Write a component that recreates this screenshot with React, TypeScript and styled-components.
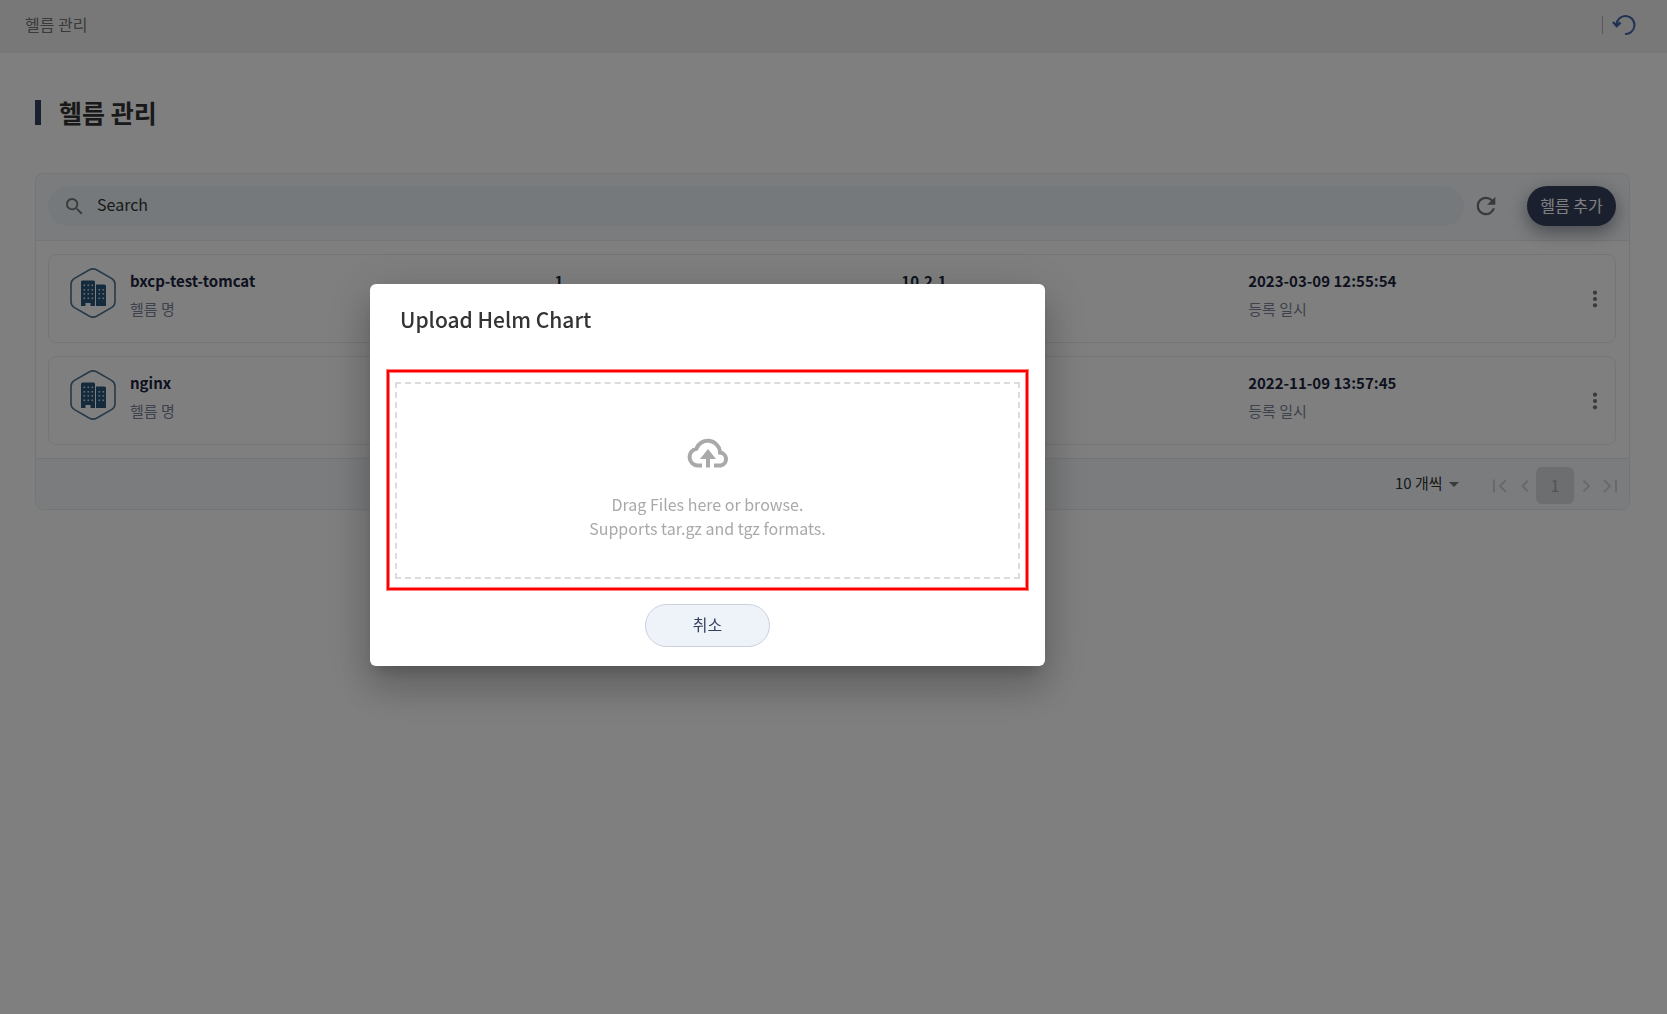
import React from 'react';
import styled, { createGlobalStyle } from 'styled-components';

const NAVY = '#36405f';
const LINE = '#e6ebef';
const BAR = '#f7f9fb';

const GlobalStyle = createGlobalStyle`
  *, *::before, *::after { box-sizing: border-box; }
  body {
    margin: 0;
    background: #fff;
    color: #333;
    font-family: "Noto Sans CJK KR", "Noto Sans", sans-serif;
    font-size: 16px;
    line-height: 24px;
  }
  button, input, select { font: inherit; color: inherit; }
  h1, h2, p, ul { margin: 0; padding: 0; }
`;

const TopBar = styled.header`
  display: flex;
  align-items: center;
  justify-content: space-between;
  height: 53px;
  padding: 0 31px 4px 25px;
  background: #f0f0f0;
  color: #757575;
`;

const Crumb = styled.span`
  padding-bottom: 2px;
`;

const TopActions = styled.div`
  display: flex;
  align-items: center;
  gap: 9px;
`;

const Divider = styled.span`
  width: 1px;
  height: 18px;
  background: #b0b0b0;
`;

const IconButton = styled.button<{ $size?: number }>`
  display: inline-flex;
  flex: none;
  align-items: center;
  justify-content: center;
  width: ${(p) => p.$size ?? 24}px;
  height: ${(p) => p.$size ?? 24}px;
  padding: 0;
  border: 0;
  background: none;
  cursor: pointer;
`;

const Main = styled.main`
  padding: 40px 37px 0 35px;
`;

const PageTitle = styled.h1`
  display: flex;
  align-items: center;
  gap: 18px;
  height: 38px;
  font-size: 25px;
  line-height: 38px;
  font-weight: 700;

  &::before {
    content: '';
    width: 6px;
    height: 25px;
    background: ${NAVY};
  }
`;

const Panel = styled.section`
  margin-top: 42px;
  border: 1px solid ${LINE};
  border-radius: 8px;
  overflow: hidden;
`;

const Toolbar = styled.div`
  display: flex;
  align-items: center;
  height: 67px;
  padding: 0 13px 2px 12px;
  border-bottom: 1px solid ${LINE};
  background: ${BAR};
`;

const SearchBox = styled.label`
  display: flex;
  flex: 1;
  align-items: center;
  gap: 14px;
  height: 40px;
  padding: 0 18px;
  border-radius: 20px;
  background: #ebf3f7;
  color: #757575;
`;

const SearchInput = styled.input`
  flex: 1;
  min-width: 0;
  padding: 0 0 4px;
  border: 0;
  outline: 0;
  background: none;

  &::placeholder { color: #333; opacity: 1; }
`;

const ReloadSlot = styled.div`
  display: flex;
  margin: 0 27px 0 8px;
`;

const AddButton = styled.button`
  width: 89px;
  height: 40px;
  padding: 0 0 2px;
  border: 0;
  border-radius: 20px;
  background: ${NAVY};
  color: #fff;
  box-shadow: 0 6px 18px rgba(40, 46, 66, 0.5);
  cursor: pointer;
`;

const HelmList = styled.ul`
  display: grid;
  gap: 13px;
  padding: 13px 13px 13px 12px;
  list-style: none;
`;

const HelmCard = styled.li`
  display: grid;
  grid-template-columns: 7fr 5fr 5fr 5fr;
  align-items: center;
  height: 89px;
  padding: 0 20px;
  border: 1px solid ${LINE};
  border-radius: 8px;
`;

const Cell = styled.div`
  display: flex;
  align-items: center;
  gap: 14px;
  height: 66px;
`;

const CellText = styled.div`
  flex: 1;
  height: 66px;
`;

const Value = styled.p`
  font-size: 15px;
  line-height: 30px;
  font-weight: 700;
  color: #1c2540;
`;

const Caption = styled.p`
  font-size: 15px;
  line-height: 25px;
  color: #7c8599;
`;

const MenuSlot = styled.div`
  margin-right: -20px;
`;

const HelmIcon = styled.svg`
  flex: none;
  align-self: flex-start;
  margin: 2px 0 0 1px;
`;

const Footer = styled.footer`
  display: flex;
  align-items: center;
  justify-content: flex-end;
  gap: 28px;
  height: 51px;
  padding: 3px 7px 0 10px;
  border-top: 1px solid ${LINE};
  background: ${BAR};
`;

const SizeField = styled.label`
  display: grid;
  grid-template-columns: auto 12px;
  align-items: center;
  gap: 5px;
  padding-bottom: 2px;
  font-size: 15px;
`;

const SizeSelect = styled.select`
  padding: 0 0 3px;
  border: 0;
  outline: 0;
  appearance: none;
  background: none;
`;

const Pager = styled.nav`
  display: flex;
  align-items: center;
  color: #d2d3d5;
`;

const CurrentPage = styled.button`
  width: 38px;
  height: 37px;
  padding: 0 0 2px;
  border: 0;
  border-radius: 6px;
  background: #dbdcde;
  color: #a6a6a6;
`;

const Overlay = styled.div`
  position: fixed;
  inset: 0;
  display: flex;
  align-items: center;
  justify-content: center;
  padding: 0 252px 64px 0;
  background: rgba(0, 0, 0, 0.5);
`;

const Dialog = styled.section`
  width: 675px;
  padding: 19px 17px 19px;
  border-radius: 6px;
  background: #fff;
  box-shadow:
    0 11px 15px -7px rgba(0, 0, 0, 0.2),
    0 24px 38px 3px rgba(0, 0, 0, 0.14),
    0 9px 46px 8px rgba(0, 0, 0, 0.12);
`;

const DialogTitle = styled.h2`
  padding: 0 13px;
  font-size: 21px;
  line-height: 32px;
  font-weight: 500;
`;

const Highlight = styled.div`
  margin-top: 35px;
  padding: 10px 6px 9px;
  border: 2px solid #f00;
  box-shadow: 0 0 0 1px rgba(255, 0, 0, 0.5), inset 0 0 0 1px rgba(255, 0, 0, 0.5);
`;

const DropZone = styled.button`
  display: flex;
  flex-direction: column;
  align-items: center;
  justify-content: center;
  gap: 24px;
  width: 100%;
  height: 197px;
  padding: 16px 0 0;
  border: 2px dashed #dcdcdc;
  background: #fff;
  color: #a9a9a9;
  cursor: pointer;
`;

const DialogActions = styled.div`
  display: flex;
  justify-content: center;
  margin-top: 14px;
`;

const CancelButton = styled.button`
  width: 125px;
  height: 43px;
  padding: 0 0 4px;
  border: 1px solid #cbd0dc;
  border-radius: 22px;
  background: #edf3f8;
  color: ${NAVY};
  cursor: pointer;
`;

interface Helm {
  name: string;
  revision?: string;
  version?: string;
  createdAt: string;
}

const helms: Helm[] = [
  { name: 'bxcp-test-tomcat', revision: '1', version: '10.2.1', createdAt: '2023-03-09 12:55:54' },
  { name: 'nginx', createdAt: '2022-11-09 13:57:45' },
];

const Building = () => (
  <HelmIcon width="46" height="50" viewBox="0 0 46 50" fill="none" aria-hidden="true">
    <path
      d="M19.5 1.7 Q23 0 26.5 1.7 L41.5 10.4 Q45 12.6 45 16 V34 Q45 37.4 41.5 39.6 L26.5 48.3 Q23 50 19.5 48.3 L4.5 39.6 Q1 37.4 1 34 V16 Q1 12.6 4.5 10.4 Z"
      stroke="#4a7291"
      strokeWidth="1.6"
    />
    <path
      d="M12.500 12.500h11q1.500 0 1.500 1.500v24h-4.500v-3h-5v3h-4.500v-24q0-1.500 1.500-1.500Z M26 16.500h8.500q1.500 0 1.500 1.500v20H26Z"
      fill="#28567a"
    />
    {[17, 21.5, 25.5, 30].map((y) =>
      [13.5, 17.5, 21.5, 28.5, 32.5].map((x) =>
        x > 26 && y < 20 ? null : (
          <rect key={`${x}-${y}`} x={x} y={y - 0.5} width="1.6" height="1.6" fill="#c8d6e1" />
        ),
      ),
    )}
  </HelmIcon>
);

const Chevron = ({ d, label }: { d: string; label: string }) => (
  <IconButton type="button" aria-label={label}>
    <svg width="24" height="24" viewBox="0 0 24 24" fill="none" stroke="currentColor" strokeWidth="2">
      <path d={d} />
    </svg>
  </IconButton>
);

export default function App() {
  return (
    <>
      <GlobalStyle />
      <TopBar>
        <Crumb>헬름 관리</Crumb>
        <TopActions>
          <Divider />
          <IconButton type="button" aria-label="되돌리기">
            <svg width="24" height="22" viewBox="0 0 24 22" fill="none" stroke="#3f64a8" strokeWidth="2">
              <path d="M4.500 12V10.500A9 9 0 1 1 13 20" />
              <path d="M1 8l3.700 4L8.500 8.500" strokeWidth="2.400" />
            </svg>
          </IconButton>
        </TopActions>
      </TopBar>

      <Main>
        <PageTitle>헬름 관리</PageTitle>
        <Panel>
          <Toolbar>
            <SearchBox>
              <svg width="17" height="17" viewBox="3 3 18 18" fill="currentColor" aria-hidden="true">
                <path d="M15.5 14h-.79l-.28-.27A6.471 6.471 0 0 0 16 9.500 6.500 6.500 0 1 0 9.500 16c1.610 0 3.090-.59 4.230-1.570l.27.28v.79l5 4.990L20.490 19l-4.990-5zm-6 0C7.010 14 5 11.990 5 9.500S7.010 5 9.500 5 14 7.010 14 9.500 11.990 14 9.500 14z" />
              </svg>
              <SearchInput type="text" placeholder="Search" aria-label="Search" />
            </SearchBox>
            <ReloadSlot>
              <IconButton type="button" $size={28} aria-label="새로고침">
                <svg width="28" height="28" viewBox="0 0 24 24" fill="#757575">
                  <path d="M17.650 6.350A7.958 7.958 0 0 0 12 4a8 8 0 1 0 7.730 10h-2.080A5.990 5.990 0 0 1 12 18c-3.310 0-6-2.690-6-6s2.690-6 6-6c1.660 0 3.140.69 4.220 1.780L13 11h7V4l-2.350 2.350z" />
                </svg>
              </IconButton>
            </ReloadSlot>
            <AddButton type="button">헬름 추가</AddButton>
          </Toolbar>

          <HelmList>
            {helms.map((h) => (
              <HelmCard key={h.name}>
                <Cell>
                  <Building />
                  <CellText>
                    <Value>{h.name}</Value>
                    <Caption>헬름 명</Caption>
                  </CellText>
                </Cell>
                <Cell>
                  <CellText>
                    <Value>{h.revision}</Value>
                  </CellText>
                </Cell>
                <Cell>
                  <CellText>
                    <Value>{h.version}</Value>
                  </CellText>
                </Cell>
                <Cell>
                  <CellText>
                    <Value>{h.createdAt}</Value>
                    <Caption>등록 일시</Caption>
                  </CellText>
                  <MenuSlot>
                    <IconButton type="button" $size={40} aria-label="메뉴">
                      <svg width="24" height="24" viewBox="0 0 24 24" fill="#757575">
                        <circle cx="12" cy="5.700" r="2.100" />
                        <circle cx="12" cy="12" r="2.100" />
                        <circle cx="12" cy="18.300" r="2.100" />
                      </svg>
                    </IconButton>
                  </MenuSlot>
                </Cell>
              </HelmCard>
            ))}
          </HelmList>

          <Footer>
            <SizeField>
              <SizeSelect aria-label="페이지 크기" defaultValue="10">
                <option value="10">10 개씩</option>
              </SizeSelect>
              <svg width="12" height="6" viewBox="0 0 12 6" fill="#757575" aria-hidden="true">
                <path d="M1 0h10L6 5Z" />
              </svg>
            </SizeField>
            <Pager>
              <Chevron label="첫 페이지" d="M6 5.500v13M18 6l-6 6 6 6" />
              <Chevron label="이전 페이지" d="M16 6.500l-5.500 5.500 5.500 5.500" />
              <CurrentPage type="button">1</CurrentPage>
              <Chevron label="다음 페이지" d="M9.500 6.500l5.500 5.500-5.500 5.500" />
              <Chevron label="마지막 페이지" d="M6 6l6 6-6 6M18 5.500v13" />
            </Pager>
          </Footer>
        </Panel>
      </Main>

      <Overlay>
        <Dialog role="dialog" aria-modal="true" aria-labelledby="upload-title">
          <DialogTitle id="upload-title">Upload Helm Chart</DialogTitle>
          <Highlight>
            <DropZone type="button">
              <svg width="42" height="30" viewBox="0 0 42 30" fill="none" aria-hidden="true">
                <path
                  d="M15 27.500H10.500A8.500 8.500 0 0 1 9.300 10.700A12.300 12.300 0 0 1 33 13.500V14.600A6.500 6.500 0 0 1 33.500 27.500H27"
                  stroke="currentColor"
                  strokeWidth="4"
                />
                <path d="M21 11l8 10h-6v8.500h-4V21h-6Z" fill="currentColor" />
              </svg>
              <span>
                Drag Files here or browse.
                <br />
                Supports tar.gz and tgz formats.
              </span>
            </DropZone>
          </Highlight>
          <DialogActions>
            <CancelButton type="button">취소</CancelButton>
          </DialogActions>
        </Dialog>
      </Overlay>
    </>
  );
}
